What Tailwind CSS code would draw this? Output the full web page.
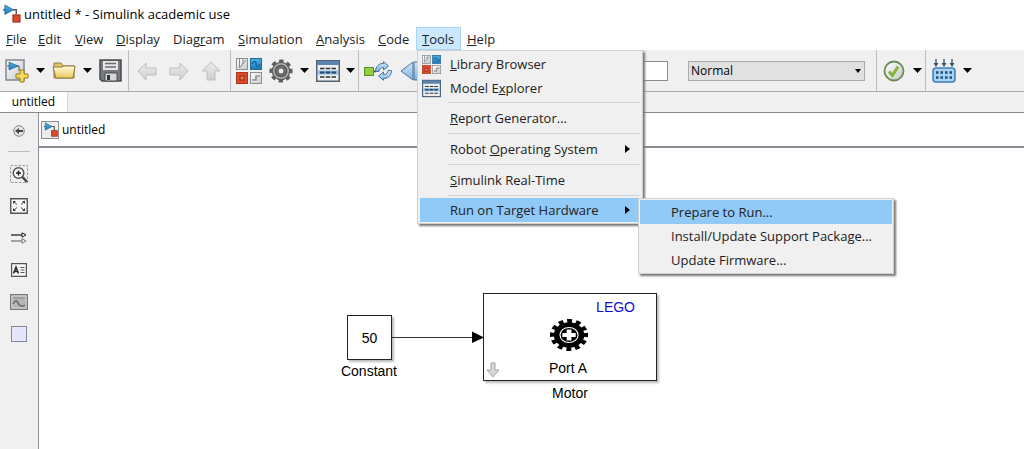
<!DOCTYPE html>
<html lang="en">
<head>
<meta charset="utf-8">
<meta name="viewport" content="width=device-width, initial-scale=1">
<title>untitled * - Simulink academic use</title>
<script src="https://cdn.jsdelivr.net/npm/@tailwindcss/browser@4"></script>
</head>
<body class="flex min-h-screen flex-col bg-white font-['Open_Sans','Noto_Sans',sans-serif] text-[13px] leading-5 text-[#222]">

<svg class="absolute h-0 w-0" aria-hidden="true">
  <defs>
    <linearGradient id="blue" x1="0" y1="0" x2="0" y2="1"><stop offset="0" stop-color="#4cb1e6"/><stop offset="1" stop-color="#1f78b8"/></linearGradient>
    <linearGradient id="grey" x1="0" y1="0" x2="1" y2="1"><stop offset="0" stop-color="#fff"/><stop offset="1" stop-color="#c4c8cc"/></linearGradient>
    <linearGradient id="gold" x1="0" y1="0" x2="0" y2="1"><stop offset="0" stop-color="#fffbe0"/><stop offset="1" stop-color="#ecc95c"/></linearGradient>
    <linearGradient id="sky" x1="0" y1="0" x2="0" y2="1"><stop offset="0" stop-color="#d8ebfa"/><stop offset="1" stop-color="#7fb2e0"/></linearGradient>
    <linearGradient id="arrow" x1="0" y1="0" x2="0" y2="1"><stop offset="0" stop-color="#ececec"/><stop offset="1" stop-color="#cfcfcf"/></linearGradient>
    <symbol id="caret" viewBox="0 0 9 5"><path d="M0 0h9L4.500 5z" fill="#000"/></symbol>
    <symbol id="model" viewBox="0 0 20 20">
      <path d="M1 6h2M11 6h4v5" fill="none" stroke="#555" stroke-width="1.500"/>
      <path d="M3 1l9 5-9 5z" fill="url(#blue)" stroke="#22648f" stroke-width=".8"/>
      <rect x="11.500" y="11.500" width="7.500" height="7.500" fill="#e0492b" stroke="#8c2a14"/>
    </symbol>
    <symbol id="library" viewBox="0 0 26 26">
      <rect x=".5" y=".5" width="11" height="11" fill="url(#grey)" stroke="#8b8f92"/>
      <path d="M3.500 1v9M7 1v5M3.500 10L10 2" fill="none" stroke="#888" stroke-width="1"/>
      <rect x="14.500" y=".5" width="11" height="11" fill="url(#blue)" stroke="#236a9a"/>
      <path d="M16 6c2-4 4-3 4 0s3 3 4 0" fill="none" stroke="#155d91" stroke-width="1.200"/>
      <rect x=".5" y="14.500" width="11" height="11" fill="#df4a26" stroke="#a83a1c"/>
      <rect x="4" y="18" width="4" height="4" fill="#ee7a58" stroke="#8e2f17"/>
      <rect x="14.500" y="14.500" width="11" height="11" fill="url(#grey)" stroke="#8b8f92"/>
      <path d="M16 22h4v-4h4" fill="none" stroke="#777" stroke-width="1.200"/>
    </symbol>
    <symbol id="explorer" viewBox="0 0 24 22">
      <rect x=".75" y=".75" width="22.500" height="20.500" fill="#eceff1" stroke="#4f6275" stroke-width="1.500"/>
      <path d="M1 1h22v4H1z" fill="#5b85b0"/>
      <path d="M2 10.500h20v4H2z" fill="#8fb9dd"/>
      <path d="M4 8.500h16M4 17h16" stroke="#333" stroke-width="1.500" stroke-dasharray="4.500 1.250"/>
      <path d="M4 12.500h16" stroke="#25486b" stroke-width="2" stroke-dasharray="4.500 1.250"/>
    </symbol>
  </defs>
</svg>

<header class="flex h-[27px] items-center gap-[3px] pl-[2px] text-black">
  <svg class="h-[19px] w-[19px]"><use href="#model"/></svg>
  <h1>untitled * - Simulink academic use</h1>
</header>

<nav class="grid h-[23px] grid-cols-[32px_37px_41px_57px_65px_78px_62px_44px_45px_40px]" aria-label="Menu bar">
  <button class="pl-[6px] text-left"><u>F</u>ile</button>
  <button class="pl-[6px] text-left"><u>E</u>dit</button>
  <button class="pl-[6px] text-left"><u>V</u>iew</button>
  <button class="pl-[6px] text-left"><u>D</u>isplay</button>
  <button class="pl-[6px] text-left">Diag<u>r</u>am</button>
  <button class="pl-[6px] text-left"><u>S</u>imulation</button>
  <button class="pl-[6px] text-left"><u>A</u>nalysis</button>
  <button class="pl-[6px] text-left"><u>C</u>ode</button>
  <div class="relative">
    <button class="h-full w-full border border-[#a8d4f5] bg-[#cce8ff] pl-[5px] text-left" aria-expanded="true"><u>T</u>ools</button>
    <div class="absolute top-full left-px z-20 w-[226px] border border-[#d0d0d0] bg-[#f0f0f0] py-px shadow-[2px_2px_2px_#777]" role="menu">
      <button class="flex h-6 w-full items-center text-left" role="menuitem"><span class="w-8 pl-1"><svg class="h-[19px] w-[19px]"><use href="#library"/></svg></span><span><u>L</u>ibrary Browser</span></button>
      <button class="flex h-6 w-full items-center text-left" role="menuitem"><span class="w-8 pl-1"><svg class="h-[19px] w-[19px]"><use href="#explorer"/></svg></span><span>Model E<u>x</u>plorer</span></button>
      <hr class="mt-[2px] mr-[2px] mb-[3px] ml-[30px] border-[#d4d4d4]">
      <button class="flex h-6 w-full items-center pl-8 text-left" role="menuitem"><span><u>R</u>eport Generator...</span></button>
      <hr class="my-[3px] mr-[2px] ml-[30px] border-[#d4d4d4]">
      <button class="flex h-6 w-full items-center justify-between pr-3 pl-8 text-left" role="menuitem"><span>Robot <u>O</u>perating System</span><svg class="h-2 w-[5px]" viewBox="0 0 5 8"><path d="M0 0l5 4-5 4z"/></svg></button>
      <hr class="my-[3px] mr-[2px] ml-[30px] border-[#d4d4d4]">
      <button class="flex h-6 w-full items-center pl-8 text-left" role="menuitem"><span><u>S</u>imulink Real-Time</span></button>
      <hr class="mt-[3px] mr-[2px] mb-[2px] ml-[30px] border-[#d4d4d4]">
      <div class="relative">
        <div class="px-[2px]">
          <button class="flex h-6 w-full items-center justify-between bg-[#91c9f7] pr-[10px] pl-[30px] text-left" role="menuitem" aria-expanded="true"><span>Run on Target Hardware</span><svg class="h-2 w-[5px]" viewBox="0 0 5 8"><path d="M0 0l5 4-5 4z"/></svg></button>
        </div>
        <div class="absolute top-0 left-[220px] w-[256px] border border-[#d0d0d0] bg-[#f0f0f0] p-px shadow-[2px_2px_2px_#777]" role="menu">
          <button class="block h-6 w-full bg-[#91c9f7] pl-[31px] text-left" role="menuitem">Prepare to Run...</button>
          <button class="block h-6 w-full pl-[31px] text-left whitespace-nowrap" role="menuitem">Install/Update Support Package...</button>
          <button class="block h-6 w-full pl-[31px] text-left" role="menuitem">Update Firmware...</button>
        </div>
      </div>
    </div>
  </div>
  <button class="pl-[6px] text-left"><u>H</u>elp</button>
</nav>

<div class="flex h-[42px] border-b border-[#a9adb3] bg-[#f0f0f0]" role="toolbar">
  <div class="flex items-center border-r border-[#b9bfc6] pr-[6px] pl-[5px]">
    <button aria-label="New model"><svg class="h-6 w-6" viewBox="0 0 24 24"><rect x="1" y="1" width="18" height="20" fill="url(#grey)" stroke="#7f8890" stroke-width="1.500"/><path d="M2 7h12v5" fill="none" stroke="#555"/><path d="M4 3l9 4-9 4z" fill="url(#blue)" stroke="#22648f" stroke-width=".7"/><path d="M15 11h4v4h4v4h-4v4h-4v-4h-4v-4h4z" fill="#f7dc5a" stroke="#9a7b1c"/></svg></button>
    <button class="mx-[7px]" aria-label="New options"><svg class="h-[5px] w-[9px]"><use href="#caret"/></svg></button>
    <button aria-label="Open"><svg class="h-6 w-6" viewBox="0 0 24 24"><path d="M2 19V4h7l2 3h11v12z" fill="#e3c368" stroke="#8d7a3c"/><path d="M1 8h9l2-1h11l-2 12H4z" fill="url(#gold)" stroke="#8d7a3c"/></svg></button>
    <button class="mx-[7px]" aria-label="Open options"><svg class="h-[5px] w-[9px]"><use href="#caret"/></svg></button>
    <button aria-label="Save"><svg class="h-[23px] w-[23px]" viewBox="0 0 23 23"><path d="M1 1h21v21H3l-2-2z" fill="#77797c" stroke="#4a4c4f" stroke-width="1.500"/><path d="M4 2h15v9H4z" fill="#e4e6e8"/><path d="M6 4.500h11M6 8h11" stroke="#6b6e70" stroke-width="1.500"/><path d="M6 14h12v8H6z" fill="#d5d8da" stroke="#4a4c4f"/><path d="M8 16h3v5H8z" fill="#333"/></svg></button>
  </div>
  <div class="flex items-center gap-3 border-r border-[#b9bfc6] pr-[9px] pl-2">
    <button aria-label="Back"><svg class="h-5 w-5" viewBox="0 0 20 20"><path d="M1 10l8-8v5h10v7H9v5z" fill="url(#arrow)" stroke="#bdbdbd"/></svg></button>
    <button aria-label="Forward"><svg class="h-5 w-5" viewBox="0 0 20 20"><path d="M19 10l-8-8v5H1v7h10v5z" fill="url(#arrow)" stroke="#bdbdbd"/></svg></button>
    <button aria-label="Up to parent"><svg class="h-5 w-5" viewBox="0 0 20 20"><path d="M10 1l9 9h-5v9H6v-9H1z" fill="url(#arrow)" stroke="#bdbdbd"/></svg></button>
  </div>
  <div class="flex items-center border-r border-[#b9bfc6] pr-[3px] pl-[5px]">
    <button class="mr-[7px]" aria-label="Library Browser"><svg class="h-[26px] w-[26px]"><use href="#library"/></svg></button>
    <button aria-label="Model configuration"><svg class="h-6 w-6" viewBox="-12 -12 24 24"><circle r="9.300" fill="none" stroke="#5c5c5c" stroke-width="4.500" stroke-dasharray="4 3.304" transform="rotate(-12)"/><circle r="8.700" fill="#a8a8a8" stroke="#5c5c5c" stroke-width="1.200"/><circle r="5.500" fill="#7a7a7a" stroke="#555" stroke-width="1.500"/><circle r="3" fill="#eee" stroke="#555"/></svg></button>
    <button class="mx-[7px]" aria-label="Configuration options"><svg class="h-[5px] w-[9px]"><use href="#caret"/></svg></button>
    <button aria-label="Model Explorer"><svg class="h-[22px] w-6"><use href="#explorer"/></svg></button>
    <button class="ml-[6px]" aria-label="Explorer options"><svg class="h-[5px] w-[9px]"><use href="#caret"/></svg></button>
  </div>
  <div class="flex items-center border-r border-[#b9bfc6] pr-[11px] pl-[5px]">
    <button aria-label="Update diagram"><svg class="h-5 w-7" viewBox="0 0 28 20"><rect x=".5" y="6.500" width="9" height="8" fill="#8fcf40" stroke="#5f8f2c"/><path d="M10 10.500h2" stroke="#333" stroke-width="1.500"/><path d="M11.500 10.500c0-5 4-8.500 8-8V.7L24.500 5l-5 4V6.500c-3 0-4.500 2-4.500 4z" fill="url(#sky)" stroke="#4476a3"/><path d="M27.500 9.500c0 5-4 8.500-8 8v1.800L14.500 15l5-4v2.500c3 0 4.500-2 4.500-4z" fill="url(#sky)" stroke="#4476a3"/></svg></button>
    <button class="ml-2" aria-label="Step back"><svg class="h-5 w-6" viewBox="0 0 24 20"><path d="M1 10l12-9v18zM14 1h4v18h-4z" fill="url(#sky)" stroke="#4e7598"/></svg></button>
    <input class="ml-[176px] h-5 w-[68px] border border-[#8a8a8a] bg-white px-1" type="text" aria-label="Simulation stop time">
    <div class="relative ml-5 flex items-center">
      <select class="h-5 w-[177px] appearance-none border border-[#aaa] bg-[#e1e1e1] pl-[2px] text-[12px] leading-[18px] text-black" aria-label="Simulation mode"><option>Normal</option></select>
      <svg class="pointer-events-none absolute right-1 h-1 w-[6px]" viewBox="0 0 6 4"><path d="M0 0h6L3 4z"/></svg>
    </div>
  </div>
  <div class="flex items-center border-r border-[#b9bfc6] pr-[3px] pl-[6px]">
    <button aria-label="Model Advisor"><svg class="h-[22px] w-[22px]" viewBox="0 0 22 22"><circle cx="11" cy="11" r="9.500" fill="url(#grey)" stroke="#6b8a54" stroke-width="1.800"/><path d="M6 11.500l3.500 4L15 6.500" fill="none" stroke="#83b53c" stroke-width="3"/></svg></button>
    <button class="ml-2" aria-label="Advisor options"><svg class="h-[5px] w-[9px]"><use href="#caret"/></svg></button>
  </div>
  <div class="flex items-center pl-[6px]">
    <button aria-label="Build model"><svg class="h-6 w-6" viewBox="0 0 24 24"><path d="M4 0v6M12 0v6M20 0v6" stroke="#34506c" stroke-width="1.300"/><path d="M1.500 4h5L4 8zM9.500 4h5L12 8zM17.500 4h5L20 8z" fill="#34506c"/><rect x="1" y="9" width="22" height="14" rx="3" fill="#a7d3f5" stroke="#3f7fb4" stroke-width="1.500"/><path d="M4 13.500h16M4 18.500h16" stroke="#1d4f80" stroke-width="2.600" stroke-dasharray="2.500 2"/></svg></button>
    <button class="ml-[7px]" aria-label="Build options"><svg class="h-[5px] w-[9px]"><use href="#caret"/></svg></button>
  </div>
</div>

<div class="flex h-[21px] border-b border-[#85888c] bg-[#f0f0f0] text-[12px] text-black" role="tablist">
  <button class="w-[68px] border-r border-[#d9d9d9] bg-white leading-5" role="tab" aria-selected="true">untitled</button>
</div>

<div class="flex flex-1">
  <aside class="flex w-[39px] flex-col items-center border-r border-[#8c9096] bg-[#f0f0f0]">
    <button class="grid h-9 place-items-center" aria-label="Hide browser"><svg class="h-3 w-3" viewBox="0 0 12 12"><circle cx="6" cy="6" r="5.300" fill="#e4e4e4" stroke="#888"/><path d="M2 6l4-3v2h4v2H6v2z" fill="#444"/></svg></button>
    <hr class="mt-[2px] mb-[6px] w-[22px] border-[#bdbdbd]">
    <button class="grid h-8 place-items-center" aria-label="Zoom"><svg class="h-[18px] w-[18px]" viewBox="0 0 18 18"><path d="M.5 .5h17v17H.5z" fill="none" stroke="#999" stroke-dasharray="2.500 1.500"/><circle cx="8.500" cy="8" r="5.300" fill="#f6f6f6" stroke="#555" stroke-width="1.500"/><path d="M6 8h5M8.500 5.500v5" stroke="#222" stroke-width="1.500"/><path d="M12.500 12l4.500 5" stroke="#444" stroke-width="2.500"/></svg></button>
    <button class="grid h-8 place-items-center" aria-label="Fit to view"><svg class="h-4 w-[18px]" viewBox="0 0 18 16"><path d="M.75 .75h16.500v14.500H.75z" fill="#fafafa" stroke="#555" stroke-width="1.400"/><path d="M3 6V3h3zM12 3h3v3zM3 10v3h3zM15 10v3h-3z" fill="#333"/><path d="M3 3l4 3.500M15 3l-4 3.500M3 13l4-3.500M15 13l-4-3.500" stroke="#444"/></svg></button>
    <button class="grid h-8 place-items-center" aria-label="Signal lines"><svg class="h-3 w-4" viewBox="0 0 16 12"><path d="M0 3h12" stroke="#222" stroke-width="1.300"/><path d="M11 .8L15 3l-4 2.200z" fill="#fff" stroke="#222"/><path d="M0 9h12" stroke="#777" stroke-width="1.300"/><path d="M11 6.800L15 9l-4 2.200z" fill="#fff" stroke="#777"/></svg></button>
    <button class="grid h-8 place-items-center" aria-label="Annotation"><svg class="h-[14px] w-4" viewBox="0 0 16 14"><path d="M.6 .6h14.800v12.800H.6z" fill="#fafafa" stroke="#555" stroke-width="1.200"/><path d="M2.500 10.500L5 4l2.500 6.500M3.500 8.500h3" fill="none" stroke="#222" stroke-width="1.500"/><path d="M9.500 4.500h4M9.500 7h4M9.500 9.500h4" stroke="#555"/></svg></button>
    <button class="grid h-8 place-items-center" aria-label="Image"><svg class="h-4 w-[18px]" viewBox="0 0 18 16"><path d="M.6 .6h16.800v14.800H.6z" fill="#d4d4d4" stroke="#777" stroke-width="1.200"/><path d="M2.500 2.500h13v11h-13z" fill="#b4b4b4"/><path d="M3 4h12" stroke="#888"/><path d="M3 10c2-4 4-4 5-1s4 4 7 2" fill="none" stroke="#666" stroke-width="1.500"/></svg></button>
    <button class="grid h-8 place-items-center" aria-label="Area"><span class="block h-4 w-4 border border-[#85859a] bg-[#e6e6fa]"></span></button>
  </aside>

  <main class="flex flex-1 flex-col">
    <div class="flex h-[35px] items-center gap-[3px] border-b-2 border-[#8b8b96] pl-[2px] text-[12px] text-black">
      <span class="grid h-[18px] w-[18px] place-items-center border border-[#8b8f92] bg-[#ededed]"><svg class="h-[15px] w-[15px]"><use href="#model"/></svg></span>
      <span>untitled</span>
    </div>

    <!-- Model canvas: block positions are diagram coordinates -->
    <div class="relative flex-1 font-['Liberation_Sans',Arial,sans-serif] text-[14px] leading-4 text-black">
      <div class="absolute top-[167px] left-[308px] grid h-[45px] w-[45px] place-items-center border border-[#222] bg-white shadow-[2px_2px_2px_#bbb]">50</div>
      <div class="absolute top-[215px] left-[290px] w-20 text-center">Constant</div>
      <svg class="absolute top-[183px] left-[353px] h-3 w-[92px]" viewBox="0 0 92 12"><path d="M0 6.500h84" stroke="#333"/><path d="M80 .5L92 6.500 80 12z"/></svg>
      <div class="absolute top-[145px] left-[444px] h-[88px] w-[174px] border border-[#222] bg-white shadow-[2px_2px_2px_#bbb]">
        <div class="pt-[5px] pr-[21px] text-right text-[#1010d0]">LEGO</div>
        <svg class="mx-auto mt-1 mb-[2px] h-8 w-10" viewBox="-20 -16 42 32" preserveAspectRatio="none">
          <g transform="scale(1 .8)"><circle r="17.500" fill="none" stroke="#000" stroke-width="5" stroke-dasharray="5 4.163" transform="rotate(-8)"/><circle r="16"/><circle r="9.500" fill="none" stroke="#fff" stroke-width="1.200"/><path d="M-2.500-7h5v4.500H7v5H2.500V7h-5V2.500H-7v-5h4.500z" fill="#fff"/></g>
        </svg>
        <div class="pt-[7px] pr-1 text-center">Port A</div>
        <svg class="absolute bottom-[2px] left-[2px] h-4 w-[14px]" viewBox="0 0 14 16"><path d="M5 1h4v7h4l-6 7-6-7h4z" fill="#d8d8d8" stroke="#a5a5a5"/></svg>
      </div>
      <div class="absolute top-[237px] left-[491px] w-20 text-center">Motor</div>
    </div>
  </main>
</div>
</body>
</html>
